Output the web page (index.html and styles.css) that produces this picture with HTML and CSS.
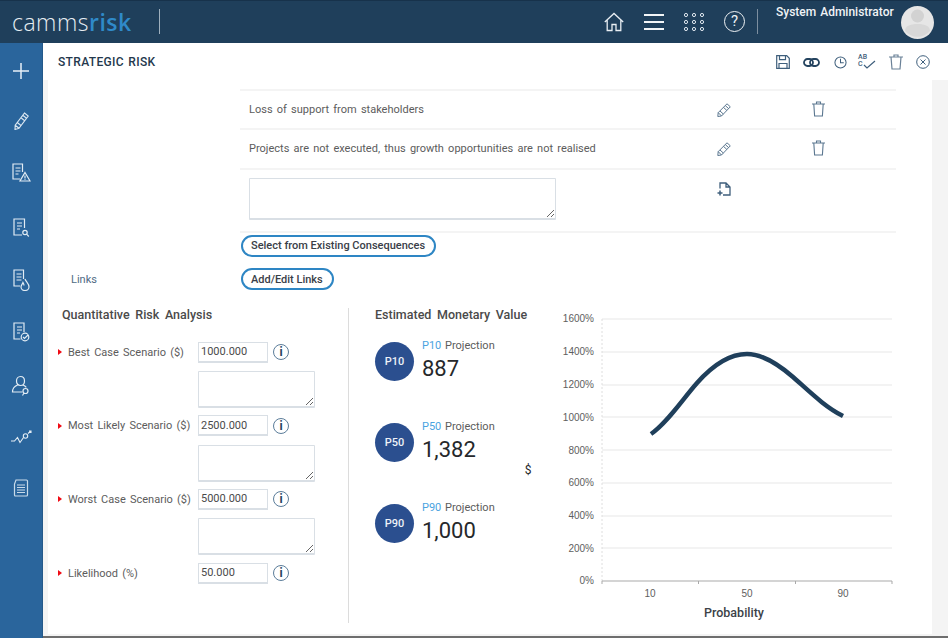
FILE: index.html
```html
<!DOCTYPE html>
<html lang="en">
<head>
<meta charset="utf-8">
<title>Strategic Risk</title>
<link rel="stylesheet" href="styles.css">
</head>
<body>
<div class="app">
  <header class="top">
    <div class="logo"><span class="logo-a">camms</span><span class="logo-b">risk</span></div>
    <div class="logo-sep"></div>
    <nav class="top-icons">
      <svg width="20" height="20" viewBox="0 0 20 20" fill="none" stroke="#e8eef3" stroke-width="1.300"><path d="M.8 10 10 1.500 19.200 10M3.200 8v10.500h4.800v-6h4v6h4.800V8"/></svg>
      <svg width="20" height="16" viewBox="0 0 20 16" fill="none" stroke="#f2f5f7" stroke-width="2"><path d="M0 1h20M0 8h20M0 15h20"/></svg>
      <svg width="20" height="18" viewBox="0 0 20 18" fill="none" stroke="#dfe7ee" stroke-width="1"><circle cx="2" cy="2" r="1.600"/><circle cx="10" cy="2" r="1.600"/><circle cx="18" cy="2" r="1.600"/><circle cx="2" cy="9" r="1.600"/><circle cx="10" cy="9" r="1.600"/><circle cx="18" cy="9" r="1.600"/><circle cx="2" cy="16" r="1.600"/><circle cx="10" cy="16" r="1.600"/><circle cx="18" cy="16" r="1.600"/></svg>
      <div class="help">?</div>
    </nav>
    <div class="user-sep"></div>
    <div class="user">System Administrator</div>
    <div class="avatar"><svg width="33" height="33" viewBox="0 0 33 33"><circle cx="16.500" cy="16.500" r="16.500" fill="#e6e6e6"/><circle cx="16.500" cy="10" r="6.500" fill="#d2d2d2"/><path d="M4 25c0-5 5-7 12.500-7S29 20 29 25a16.500 16.500 0 0 1-25 0z" fill="#d8d8d8"/></svg></div>
  </header>
  <div class="body">
    <aside class="side">
      <svg width="16" height="16" viewBox="0 0 16 16" stroke="#e8f0f7" stroke-width="1.500"><path d="M8 0v16M0 8h16"/></svg>
      <svg width="15" height="18" viewBox="0 0 15 18" fill="none" stroke="#dce8f2" stroke-width="1.100"><path d="M10.500 1 14.200 4 5 16.300l-4 1.200.2-4.300zM8.800 3.300l3.700 3M7 5.700l3.700 3M3.200 10.500 7 13.500M1.200 13.200 5 16.300"/></svg>
      <svg width="20" height="20" viewBox="0 0 20 20" fill="none" stroke="#e2ecf4" stroke-width="1.200"><path d="M9 16H2V1h9.500v8M4.500 5h5M4.500 8h5M4.500 11h3"/><path d="M14 9.500 19 18H9z"/><path d="M14 12.500v3M14 16.300v.7"/></svg>
      <svg class="nudge-down" width="18" height="20" viewBox="0 0 18 20" fill="none" stroke="#e2ecf4" stroke-width="1.200"><path d="M10 17H2V1h10.500v9M5 5h5M5 8h5M5 11h3"/><circle cx="13" cy="14.500" r="2.200"/><path d="m14.600 16.200 2.200 2.300"/></svg>
      <svg width="18" height="22" viewBox="0 0 18 22" fill="none" stroke="#e2ecf4" stroke-width="1.200"><path d="M8 17H2V1h9.500v9M4.500 5h5M4.500 8h5M4.500 11h5"/><path d="M13 10c1 3 4 4.500 4 8a4 3.500 0 0 1-8 0c0-2 1.500-3 2-4.500.6 1 1 2 1 3"/></svg>
      <svg class="nudge-up" width="18" height="20" viewBox="0 0 18 20" fill="none" stroke="#e2ecf4" stroke-width="1.200"><path d="M8.500 17H2V1h10v9M5 5h5M5 8h5M5 11h3"/><circle cx="13" cy="15" r="3.800"/><path d="m11 15 1.500 1.500L16 13"/></svg>
      <svg class="nudge-up" width="20" height="22" viewBox="0 0 20 22" fill="none" stroke="#e2ecf4" stroke-width="1.200"><path d="M9.500 1.500c2.500 0 4 2 4 4.500s-1.500 4.500-4 4.500-4-2-4-4.500 1.500-4.500 4-4.500zM6.500 10C3 11.500 1.500 13.500 1.500 17h10M12 10c1.500.6 2.500 1.400 3.300 2.400"/><circle cx="14.500" cy="16" r="2.500"/><path d="m13 18-1.500 2.500"/></svg>
      <svg class="nudge-up" width="22" height="14" viewBox="0 0 22 14" fill="none" stroke="#e2ecf4" stroke-width="1.100"><path d="M1 11h3.500l3-3.500 2.500 5 3.500-5"/><circle cx="15.500" cy="6" r="2.200"/><path d="m18 3.500 3-2.500M19 1h2v2"/></svg>
      <svg width="16" height="19" viewBox="0 0 16 19" fill="none" stroke="#c9dbea" stroke-width="1.200"><path d="M3 1h10.500a1 1 0 0 1 1 1v14a1 1 0 0 1-1 1H2.500a1 1 0 0 1-1-1V5z"/><path d="M4 6h8M4 8.500h8M4 11h8M4 13.500h8"/></svg>
    </aside>
    <main class="main">
      <div class="titlebar">
        <h1 class="page-title">STRATEGIC RISK</h1>
        <div class="actions">
          <svg width="14" height="14" viewBox="0 0 14 14" fill="none" stroke="#3f5f7c" stroke-width="1.200"><path d="M.7.7h10l2.600 2.600v10H.7zM3.500.7v4h6v-4M3 13.300V8.500h8v4.800"/></svg>
          <svg class="act-link" width="17" height="9" viewBox="0 0 17 9" fill="none" stroke="#24435f" stroke-width="1.800"><rect x="1" y="1" width="9" height="7" rx="3.500"/><rect x="7" y="1" width="9" height="7" rx="3.500"/></svg>
          <svg class="act-clock" width="13" height="13" viewBox="0 0 14 14" fill="none" stroke="#3f5f7c" stroke-width="1.100"><circle cx="7" cy="7" r="6"/><path d="M7 3v4.300h3.500"/></svg>
          <div class="spell"><span class="spell-t">AB<br>C</span><svg width="13" height="9" viewBox="0 0 13 9" fill="none" stroke="#3f5f7c" stroke-width="1.200"><path d="m1 5 3 3 8-7"/></svg></div>
          <svg width="14" height="16" viewBox="0 0 14 16" fill="none" stroke="#6a8197" stroke-width="1.200"><path d="M0 3h14M5 3V1h4v2M2 3l1 12h8l1-12"/></svg>
          <svg width="14" height="14" viewBox="0 0 14 14" fill="none" stroke="#3f5f7c" stroke-width="1"><circle cx="7" cy="7" r="6.300"/><path d="m4.500 4.500 5 5M9.500 4.500l-5 5"/></svg>
        </div>
      </div>
      <div class="canvas">
        <div class="panel">
          <section class="conseq">
            <div class="row row-a">
              <div class="cell-text">Loss of support from stakeholders</div>
              <div class="cell-edit"><svg width="14" height="14" viewBox="0 0 14 14" fill="none" stroke="#5b7790" stroke-width="1"><path d="M10 .8 13.300 3.800 4.500 13 .8 13.500l.4-3.900zM8.300 2.600l3.300 3M6.500 4.400 9.800 7.400M3 8l3.300 3M1.200 9.600l3.300 3.400"/></svg></div>
              <div class="cell-del"><svg width="13" height="16" viewBox="0 0 13 16" fill="none" stroke="#5b7790" stroke-width="1.100"><path d="M0 3h13M4.500 3V1h4v2M1.800 3l.8 12h7.800l.8-12"/></svg></div>
            </div>
            <div class="row row-b">
              <div class="cell-text">Projects are not executed, thus growth opportunities are not realised</div>
              <div class="cell-edit"><svg width="14" height="14" viewBox="0 0 14 14" fill="none" stroke="#5b7790" stroke-width="1"><path d="M10 .8 13.300 3.800 4.500 13 .8 13.500l.4-3.900zM8.300 2.600l3.300 3M6.500 4.400 9.800 7.400M3 8l3.300 3M1.200 9.600l3.300 3.400"/></svg></div>
              <div class="cell-del"><svg width="13" height="16" viewBox="0 0 13 16" fill="none" stroke="#5b7790" stroke-width="1.100"><path d="M0 3h13M4.500 3V1h4v2M1.800 3l.8 12h7.800l.8-12"/></svg></div>
            </div>
            <div class="row row-c">
              <div class="cell-text"><textarea class="area area-wide"></textarea></div>
              <div class="cell-edit"><svg width="14" height="14" viewBox="0 0 14 14" fill="none" stroke="#3f5f7c" stroke-width="1.300"><path d="M3 6.500V1h6l4 4v8H6M9 1v4h4"/><path d="M3 8.500v5M.5 11h5" stroke-width="1.500"/></svg></div>
              <div class="cell-del"></div>
            </div>
            <div class="btn-row"><button class="pill">Select from Existing Consequences</button></div>
            <div class="links-row"><span class="links-label">Links</span><button class="pill">Add/Edit Links</button></div>
          </section>
          <section class="analysis">
            <div class="quant">
              <h2 class="sec-title quant-title">Quantitative Risk Analysis</h2>
              <div class="field"><span class="req"></span><label class="flabel">Best Case Scenario ($)</label><input class="num" value="1000.000"><span class="info">i</span></div>
              <div class="note"><textarea class="area area-small"></textarea></div>
              <div class="field"><span class="req"></span><label class="flabel">Most Likely Scenario ($)</label><input class="num" value="2500.000"><span class="info">i</span></div>
              <div class="note"><textarea class="area area-small"></textarea></div>
              <div class="field"><span class="req"></span><label class="flabel">Worst Case Scenario ($)</label><input class="num" value="5000.000"><span class="info">i</span></div>
              <div class="note"><textarea class="area area-small"></textarea></div>
              <div class="field"><span class="req"></span><label class="flabel">Likelihood (%)</label><input class="num" value="50.000"><span class="info">i</span></div>
            </div>
            <div class="emv">
              <h2 class="sec-title emv-title">Estimated Monetary Value</h2>
              <div class="proj">
                <div class="dot">P10</div>
                <div><div class="proj-cap"><span class="proj-p">P10</span> Projection</div><div class="proj-val">887</div></div>
              </div>
              <div class="proj">
                <div class="dot">P50</div>
                <div><div class="proj-cap"><span class="proj-p">P50</span> Projection</div><div class="proj-val">1,382</div></div>
              </div>
              <div class="proj">
                <div class="dot">P90</div>
                <div><div class="proj-cap"><span class="proj-p">P90</span> Projection</div><div class="proj-val">1,000</div></div>
              </div>
            </div>
            <svg class="chart" width="376" height="315" viewBox="520 308 376 315">
              <g class="grid">
                <path d="M602 319h290M602 352h290M602 385h290M602 417h290M602 450h290M602 483h290M602 516h290M602 548h290"/>
              </g>
              <path class="yline" d="M602 319V581"/>
              <path class="xaxis" d="M602 581h290M602 581v3M698.500 581v3M795.500 581v3M892 581v3"/>
              <g class="ylab">
                <text x="594" y="322">1600%</text><text x="594" y="355">1400%</text><text x="594" y="388">1200%</text><text x="594" y="421">1000%</text><text x="594" y="454">800%</text><text x="594" y="486">600%</text><text x="594" y="519">400%</text><text x="594" y="552">200%</text><text x="594" y="584">0%</text>
              </g>
              <g class="xlab"><text x="650" y="597">10</text><text x="747" y="597">50</text><text x="843" y="597">90</text></g>
              <text class="xtitle" x="734" y="617">Probability</text>
              <text class="ytitle" x="528" y="474">$</text>
              <path class="curve" d="M651 434C667 423 682 400 697 383C712 366 730 354 747 354C763 354 778 364 793 377C810 392 825 407 843 416"/>
            </svg>
          </section>
        </div>
      </div>
    </main>
  </div>
</div>
</body>
</html>
```
FILE: styles.css
```css
* { box-sizing: border-box; }
html, body { margin: 0; padding: 0; }
body { width: 948px; height: 638px; overflow: hidden; font-family: Roboto, "Liberation Sans", sans-serif; background: #fff; }
.app { display: flex; flex-direction: column; height: 638px; }

.top { height: 43px; flex: none; background: #1f3f5b; border-top: 1px solid #17324b; display: flex; align-items: center; color: #fff; }
.logo { width: 159px; padding-left: 12px; font-family: "Open Sans", sans-serif; font-size: 23px; letter-spacing: .5px; line-height: 40px; margin-top: -1px; white-space: nowrap; }
.logo-a { color: #e6edf2; font-weight: 300; }
.logo-b { color: #2f8ac9; font-weight: 600; }
.logo-sep { width: 1px; height: 25px; background: #9fb0be; margin-top: -2px; }
.top-icons { margin-left: 444px; display: flex; align-items: center; gap: 20px; margin-top: -1px; }
.help { width: 21px; height: 21px; border: 1.500px solid #eef2f5; border-radius: 50%; font-size: 15px; line-height: 18px; text-align: center; color: #eef2f5; }
.user-sep { width: 1px; height: 25px; background: #7d8fa0; margin-left: 12px; margin-top: -2px; }
.user { margin-left: 18px; font-size: 12px; font-weight: 500; word-spacing: 1px; color: #f0f3f6; width: 125px; align-self: flex-start; line-height: 22px; white-space: nowrap; }
.avatar { width: 33px; height: 33px; }
.avatar svg { display: block; }

.body { flex: 1; display: flex; min-height: 0; }
.side { width: 43px; flex: none; background: #2a659c; border-right: 1px solid #24598a; display: flex; flex-direction: column; align-items: center; padding-top: 20px; gap: 33px; }
.side svg { flex: none; }
.side .nudge-down { margin: 2px 0 -2px; }
.side .nudge-up { margin: -2px 0 2px; }

.main { flex: 1; display: flex; flex-direction: column; min-width: 0; }
.titlebar { height: 37px; flex: none; display: flex; align-items: center; justify-content: space-between; padding: 0 18px 0 15px; }
.page-title { margin: 0; font-size: 12px; font-weight: 500; color: #24384d; letter-spacing: .35px; word-spacing: 1px; }
.actions { display: flex; align-items: center; gap: 13px; padding-top: 1px; }
.actions svg { display: block; }
.act-link { margin-right: 1px; }
.act-clock { margin-right: -2px; }
.spell { position: relative; width: 18px; height: 14px; margin-left: 0; }
.spell-t { position: absolute; left: 0; top: -1px; font-size: 7px; line-height: 7px; font-weight: 500; color: #3f5f7c; }
.spell svg { position: absolute; left: 5px; top: 5px; }

.canvas { flex: 1; min-height: 0; background: #f4f4f4; padding: 0 16px 2px 5px; border-bottom: 2px solid #6e6e6e; }
.panel { background: #fff; height: 100%; }

.conseq { padding: 9px 36px 0 0; display: flex; flex-direction: column; align-items: stretch; }
.row { margin-left: 192px; display: flex; border-top: 2px solid #f4f4f4; font-size: 11px; color: #5c5c5c; word-spacing: 1.500px; }
.row-a { height: 39px; }
.row-b { height: 40px; }
.row-c { height: 65px; border-bottom: 2px solid #f4f4f4; }
.cell-text { width: 469px; padding: 12px 0 0 9px; }
.row-c .cell-text { padding-top: 8px; }
.cell-edit { width: 95px; padding: 12px 0 0 8px; }
.cell-del { padding: 10px 0 0 8px; }
.cell-edit svg, .cell-del svg { display: block; }
.area { display: block; border: 1px solid #d9dfe5; border-width: 1px 1px 2px; background: #fff; resize: both; margin: 0; padding: 0; border-radius: 1px; }
.area-wide { width: 307px; height: 42px; }
.area-small { width: 117px; height: 37px; }
.btn-row { margin-left: 193px; height: 35px; padding-top: 1px; }
.links-row { display: flex; align-items: flex-start; height: 30px; }
.links-label { width: 193px; padding: 5px 0 0 23px; font-size: 11px; color: #4f6b84; }
.pill { height: 22px; padding: 0 9px 0 8px; border: 2px solid #2e86c4; border-radius: 11px; background: #fff; font-family: Roboto, sans-serif; font-size: 11px; font-weight: 500; color: #3a4048; white-space: nowrap; }

.analysis { display: flex; margin-top: 10px; height: 315px; }
.quant { width: 301px; flex: none; border-right: 1px solid #dcdcdc; padding-left: 10px; }
.sec-title { margin: 0; font-size: 12.500px; font-weight: 500; color: #4a4a4a; line-height: 13px; word-spacing: 2.500px; }
.quant-title { padding-left: 4px; margin-bottom: 21px; }
.field { display: flex; align-items: center; height: 20px; }
.req { width: 0; height: 0; border-left: 4px solid #f00a14; border-top: 3.500px solid transparent; border-bottom: 3.500px solid transparent; margin-right: 6px; }
.flabel { width: 130px; font-size: 11px; color: #5c5c5c; word-spacing: 1.500px; white-space: nowrap; }
.num { width: 70px; height: 21px; border: 1px solid #d9dfe5; border-width: 1px 1px 2px; padding: 0 2px; font-family: Roboto, sans-serif; font-size: 11px; color: #4a4a4a; outline: none; margin: 0; }
.info { width: 16px; height: 16px; margin-left: 5px; border: 1px solid #5b7d9a; border-radius: 50%; font-size: 12px; line-height: 14px; font-weight: 700; text-align: center; color: #24435f; }
.note { padding: 9px 0 0 140px; height: 53.700px; }

.emv { width: 171px; flex: none; padding-left: 26px; white-space: nowrap; }
.emv-title { margin-bottom: 18px; }
.proj { display: flex; gap: 8px; height: 81px; }
.dot { width: 39px; height: 39px; margin-top: 3px; border-radius: 50%; background: #2b4f8f; color: #eef2f8; font-size: 11px; font-weight: 500; line-height: 39px; text-align: center; flex: none; }
.proj-cap { font-size: 11px; color: #5c5c5c; line-height: 13px; word-spacing: 1px; }
.proj-p { color: #4aa3df; }
.proj-val { font-size: 22px; font-weight: 400; color: #26282b; line-height: 28px; margin-top: 3px; }

.chart { display: block; flex: none; }
.grid path { stroke: #f0f0f0; stroke-width: 1.500; fill: none; }
.yline { stroke: #dedede; stroke-dasharray: 2 2; fill: none; }
.xaxis { stroke: #a9a9a9; stroke-width: 1; fill: none; }
.ylab text { font-family: "Liberation Sans", sans-serif; font-size: 10px; fill: #5e5e5e; text-anchor: end; }
.xlab text { font-family: "Liberation Sans", sans-serif; font-size: 10px; fill: #5e5e5e; text-anchor: middle; }
.xtitle { font-family: Roboto, sans-serif; font-size: 12.500px; font-weight: 500; fill: #3c4248; text-anchor: middle; }
.ytitle { font-family: Roboto, sans-serif; font-size: 12px; fill: #26282b; text-anchor: middle; }
.curve { fill: none; stroke: #1f3f5b; stroke-width: 4.500; }
```
